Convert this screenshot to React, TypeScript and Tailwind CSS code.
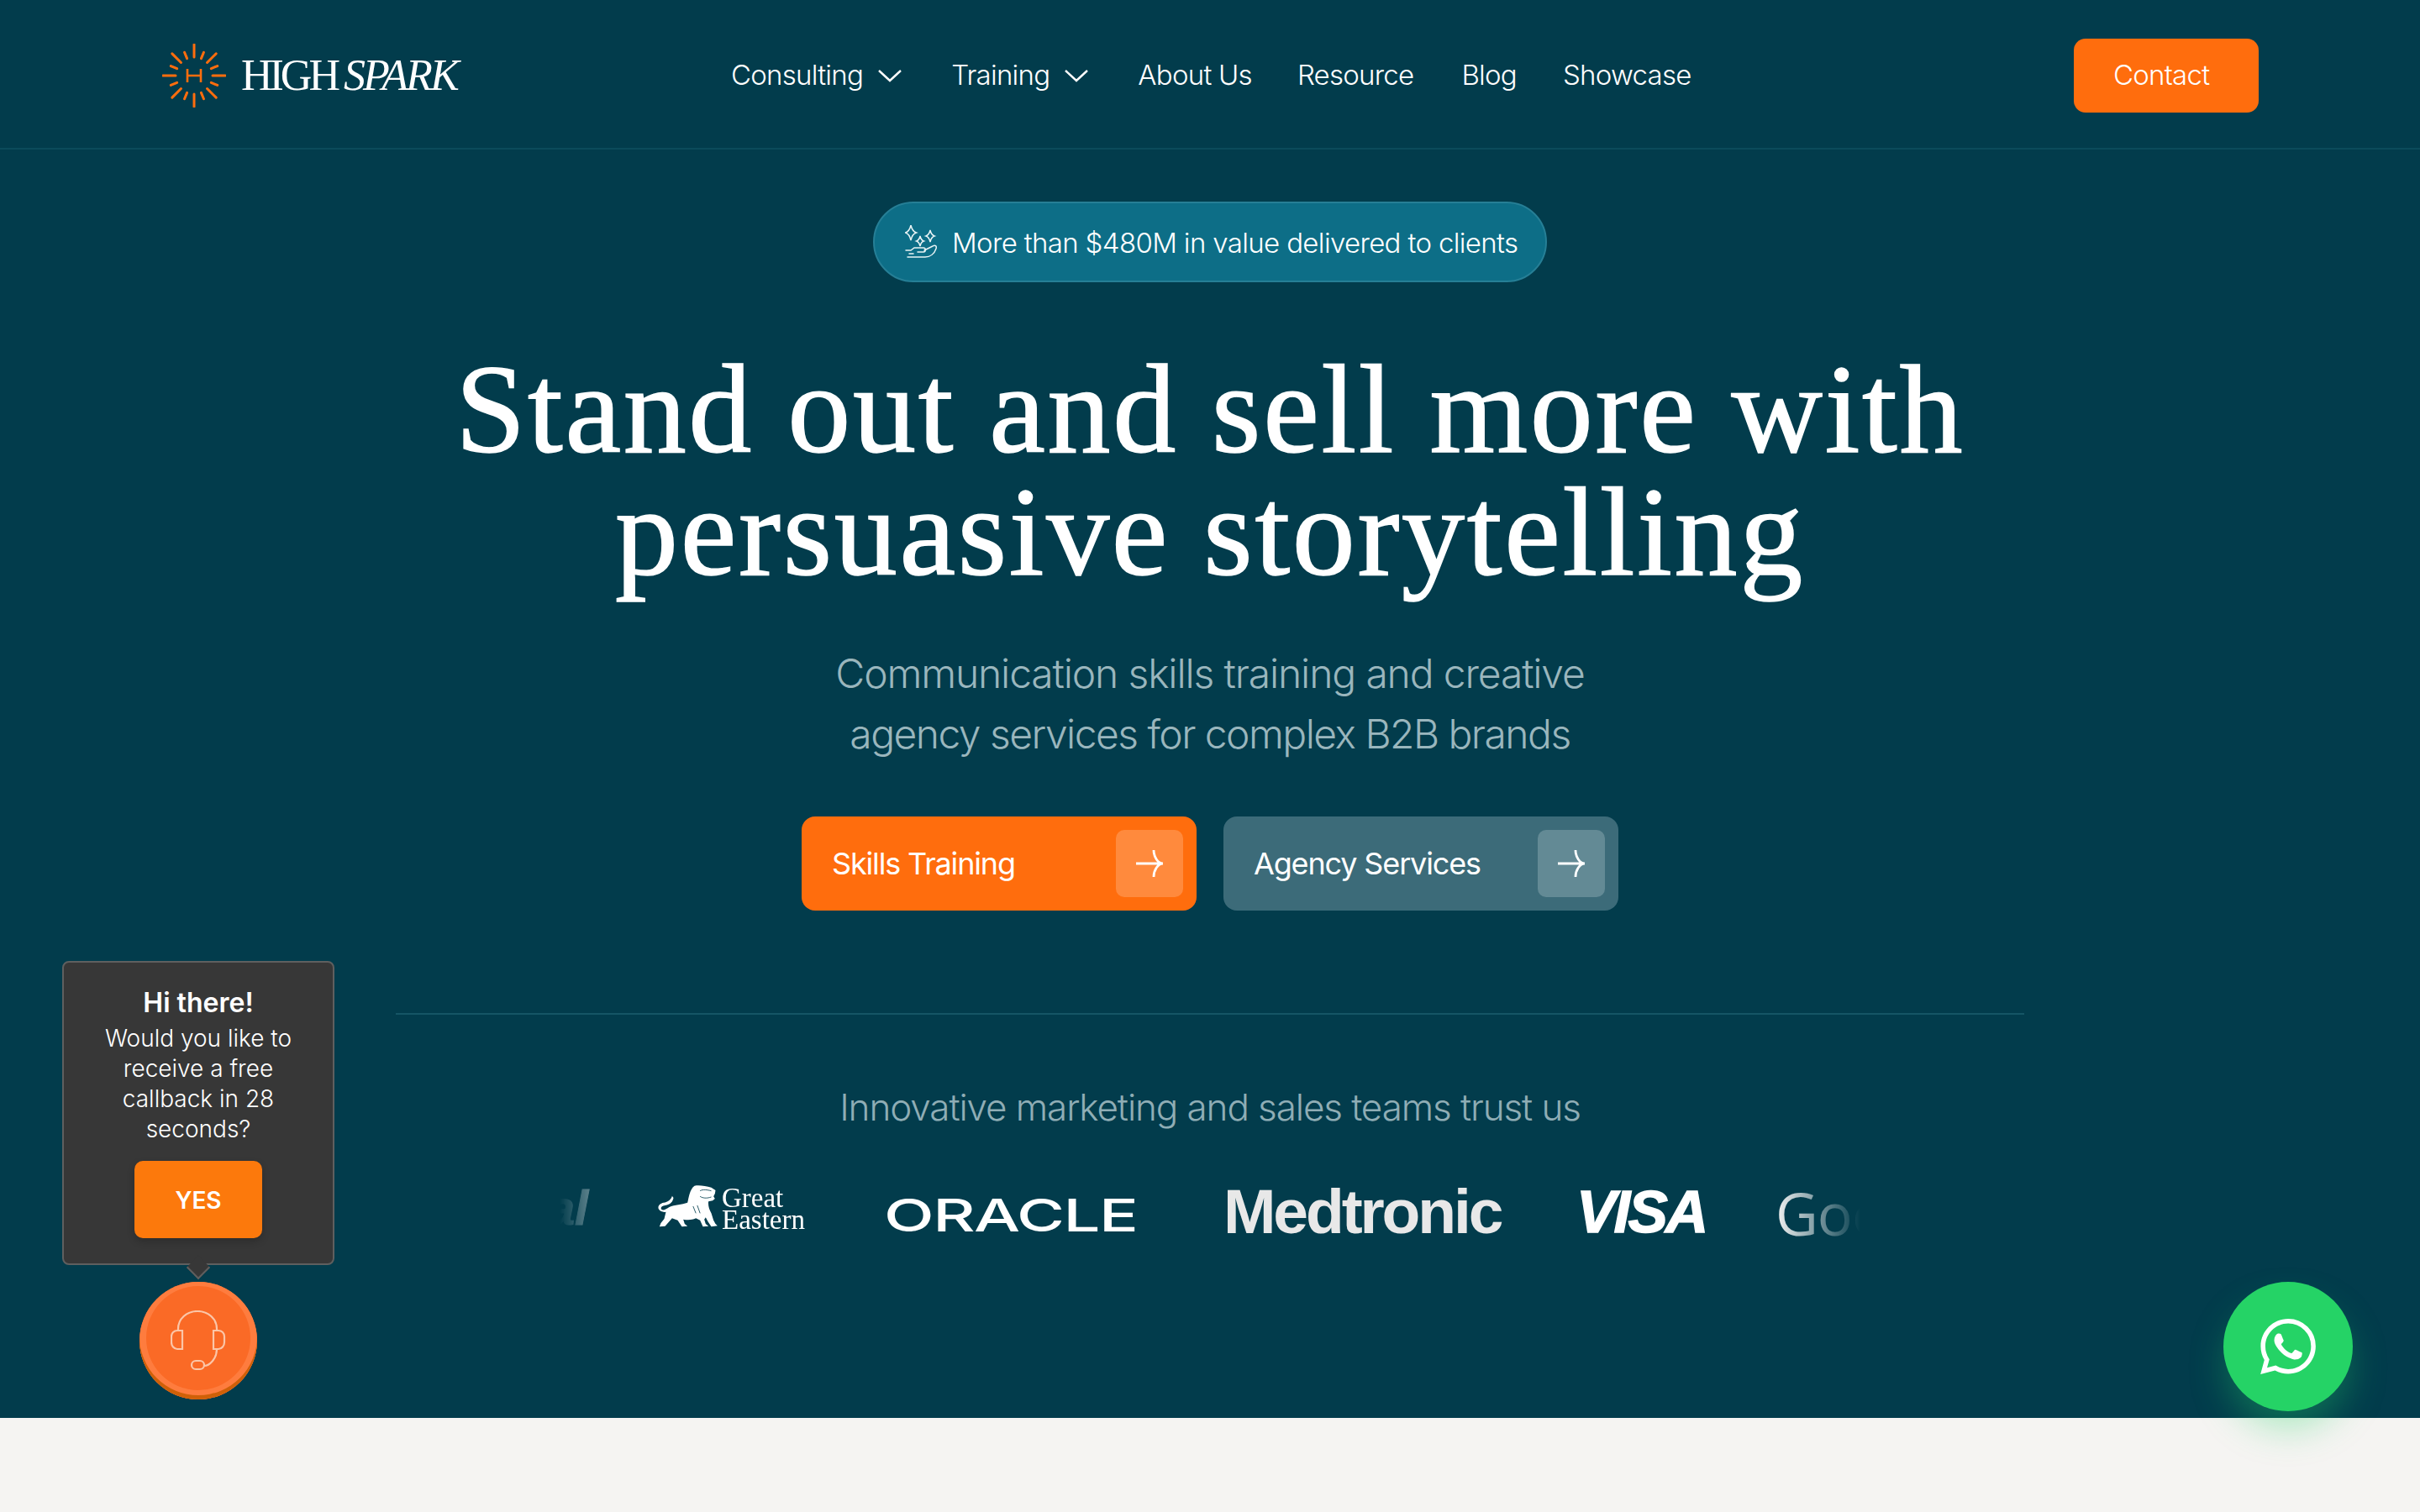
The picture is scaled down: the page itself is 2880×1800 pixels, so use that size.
import { SiWhatsapp } from "react-icons/si";

const sans = "font-['Inter','Liberation_Sans',sans-serif]";
const serif = "font-['Liberation_Serif',serif]";

function Sun() {
  const rays = Array.from({ length: 16 }, (_, i) => i);
  return (
    <svg width="76" height="76" viewBox="-38 -38 76 76" className="shrink-0">
      {rays.map((i) => (
        <line key={i} x1="0" y1="-22" x2="0" y2={i % 2 === 0 ? -37 : -30} stroke="#ff6d0d" strokeWidth="3" strokeLinecap="round" transform={`rotate(${i * 22.5})`} />
      ))}
      <path d="M-8 -8V8M8 -8V8M-8 0H8" stroke="#ff6d0d" strokeWidth="2.6" fill="none" />
    </svg>
  );
}

function Chevron() {
  return (
    <svg width="30" height="16" viewBox="0 0 30 16" fill="none" className="ml-[17px]">
      <path d="M2 2L15 14L28 2" stroke="#fff" strokeWidth="2.4" />
    </svg>
  );
}

function Arrow() {
  return (
    <svg width="34" height="34" viewBox="0 0 34 34" fill="none">
      <path d="M1 17H33M33 17C27 17 22 9 22 1M33 17C27 17 22 25 22 33" stroke="#fff" strokeWidth="2.8" />
    </svg>
  );
}

function Star({ x, y, r }: { x: number; y: number; r: number }) {
  const k = r * 0.18;
  return <path d={`M${x} ${y - r}Q${x + k} ${y - k} ${x + r * 0.72} ${y}Q${x + k} ${y + k} ${x} ${y + r}Q${x - k} ${y + k} ${x - r * 0.72} ${y}Q${x - k} ${y - k} ${x} ${y - r}Z`} />;
}

function BadgeIcon() {
  return (
    <svg width="38" height="40" viewBox="0 0 38 40" fill="none" stroke="#e8f3f5" strokeWidth="1.5" className="shrink-0">
      <Star x={7} y={9} r={9} />
      <Star x={30} y={13} r={7} />
      <Star x={18} y={19} r={6} />
      <path d="M1 30H7L11 27H22C25 27 25 32 22 32H15M23 30L33 25C36 23 38 25 37 28C35 34 30 38 24 38H3M5 34H10" strokeLinecap="round" />
    </svg>
  );
}

function Lion() {
  return (
    <svg width="72" height="50" viewBox="0 0 215 150" className="shrink-0">
      <path fill="#fff" d="M130 2C145 -1 170 2 190 8L205 18L203 30L198 40L203 48L195 55L180 58C178 72 182 85 190 100L198 125L205 138L212 145L190 148L178 130L170 115L165 122L170 138L180 146L160 148L150 125L135 118C120 125 105 125 90 122L95 138L105 146L85 148L70 125L50 118L35 135L25 146L5 148L10 135L22 120L28 95C20 97 8 95 2 85C-2 75 5 65 20 62C35 60 48 50 50 38L55 45C52 60 45 68 25 72C12 74 8 80 12 86C18 92 30 85 40 78C60 68 85 70 105 62C110 45 112 15 130 2Z" />
      <path d="M125 75L135 100M140 72L150 100M150 20C160 14 175 16 190 20M150 40C160 46 172 48 190 42" stroke="#023d4d" strokeWidth="2.5" fill="none" />
    </svg>
  );
}

function Headset() {
  return (
    <svg width="66" height="72" viewBox="0 0 66 72" fill="none" stroke="#fbc6a8" strokeWidth="2.2">
      <path d="M9 24V22C9 10 19 1 32 1C45 1 55 10 55 22V24" />
      <path d="M14 24H8C4 24 1 27 1 31V38C1 42 4 46 8 46H14Z" />
      <path d="M51 24H57C61 24 64 27 64 31V38C64 42 61 46 57 46H51Z" />
      <path d="M55 46C55 58 46 66 40 66" />
      <rect x="25" y="60" width="15" height="10" rx="5" />
    </svg>
  );
}

function PrimaryBtn({ label, bg, box }: { label: string; bg: string; box: string }) {
  return (
    <a className={`w-[470px] h-[112px] rounded-[16px] flex items-center justify-between pl-[36px] pr-[16px] text-[36px] text-white tracking-[-1.15px] ${bg}`}>
      <span>{label}</span>
      <span className={`w-[80px] h-[80px] rounded-[10px] flex items-center justify-center ${box}`}>
        <Arrow />
      </span>
    </a>
  );
}

export default function App() {
  return (
    <div className={`relative h-[1800px] w-full overflow-hidden bg-[#f5f4f2] ${sans}`}>
      <section className="h-[1688px] bg-[#023c4c]">
        <header className="h-[178px] pt-[4px] border-b-2 border-[#0b4b5b] flex items-center pl-[193px] pr-[192px] text-white">
          <div className="flex items-center w-[677px]">
            <Sun />
            <div className={`ml-[18px] flex items-baseline text-[52px] leading-none ${serif}`}>
              <span className="tracking-[-4px]">HIGH</span>
              <span className="ml-[8px] italic tracking-[-2.9px]">SPARK</span>
            </div>
          </div>
          <nav className="flex items-center text-[33px] font-[350] tracking-[-0.75px]">
            <span>Consulting</span>
            <Chevron />
            <span className="ml-[58px]">Training</span>
            <Chevron />
            <span className="ml-[58px]">About Us</span>
            <span className="ml-[54px]">Resource</span>
            <span className="ml-[57px]">Blog</span>
            <span className="ml-[55px]">Showcase</span>
          </nav>
          <a className="ml-auto w-[220px] h-[88px] rounded-[14px] bg-[#ff6d0d] flex items-center pl-[47px] text-[33px] font-[350] tracking-[-0.75px]">Contact</a>
        </header>

        <div className="flex flex-col items-center">
          <div className="mt-[62px] h-[96px] w-[802px] rounded-[48px] bg-[#0d6e87] border-2 border-[#267f96] flex items-center pl-[36px] text-white text-[33px] font-[350] tracking-[-0.65px] whitespace-nowrap">
            <BadgeIcon />
            <span className="ml-[18px] mt-[4px]">More than $480M in value delivered to clients</span>
          </div>

          <h1 className={`mt-[78px] text-center text-white text-[150px] leading-[146px] tracking-[2.7px] [-webkit-text-stroke:1.5px_white] ${serif}`}>
            Stand out and sell more with
            <br />
            persuasive storytelling
          </h1>

          <p className="mt-[60px] text-center text-[#9ab6bd] text-[48px] leading-[72px] font-light tracking-[-1.15px]">
            Communication skills training and creative
            <br />
            <span className="tracking-[-1.55px]">agency services for complex B2B brands</span>
          </p>

          <div className="mt-[62px] flex gap-[32px]">
            <PrimaryBtn label="Skills Training" bg="bg-[#ff6d0d]" box="bg-[#ff8a3d]" />
            <PrimaryBtn label="Agency Services" bg="bg-[#3c6b79]" box="bg-[#638a95]" />
          </div>

          <div className="mt-[122px] w-[1938px] h-[2px] bg-[#155565]" />

          <p className="mt-[80px] text-[#8fadb5] text-[44px] leading-[60px] font-light tracking-[-1.1px]">Innovative marketing and sales teams trust us</p>

          <div className="mt-[49px] w-[1548px] h-[90px] flex items-center overflow-hidden text-white [mask-image:linear-gradient(to_right,transparent_0,black_100px,black_1448px,transparent_100%)]">
            <div className="w-[34px] shrink-0 flex justify-end text-[58px] font-bold italic font-['Liberation_Sans',sans-serif] [-webkit-text-stroke:1px_white] mt-[-10px]">al</div>
            <div className="ml-[83px] flex items-center shrink-0 mt-[-12px]">
              <Lion />
              <div className={`ml-[4px] mt-[6px] text-[33px] leading-[26px] ${serif}`}>
                Great
                <br />
                Eastern
              </div>
            </div>
            <div className="ml-[94px] w-[300px] shrink-0 font-medium text-[54px] leading-none origin-left scale-x-[1.44] tracking-[-1px] mt-[10px]">ORACLE</div>
            <div className="ml-[104px] w-[332px] shrink-0 font-bold text-[75px] leading-none text-[#e8e8e8] font-['Liberation_Sans',sans-serif] tracking-[-3.1px]">Medtronic</div>
            <div className="ml-[88px] w-[155px] shrink-0 font-bold italic text-[71px] leading-none font-['Liberation_Sans',sans-serif] tracking-[-2.8px] [-webkit-text-stroke:1.5px_white] mt-[0px]">VISA</div>
            <div className="ml-[82px] shrink-0 text-[70px] leading-none font-medium font-['Open_Sans',sans-serif] text-[#f2f2f2] tracking-[-1px] mt-[4px]">Google</div>
          </div>
        </div>
      </section>

      {/* callback widget */}
      <div className="absolute left-[74px] top-[1144px] w-[324px] h-[362px] rounded-[8px] bg-[#373737] border-2 border-[#5f5f5f] flex flex-col items-center text-white text-center">
        <div className="mt-[28px] text-[32px] leading-[40px] font-semibold">Hi there!</div>
        <div className="mt-[4px] w-[270px] text-[28px] leading-[36px] font-light">Would you like to receive a free callback in 28 seconds?</div>
        <a className="mt-[20px] w-[152px] h-[92px] rounded-[10px] bg-[#fc790c] flex items-center justify-center pt-[2px] text-[28px] font-semibold shadow-[0_4px_10px_rgba(0,0,0,0.2)]">YES</a>
        <span className="absolute left-1/2 -translate-x-1/2 bottom-[-16px] w-[20px] h-[20px] rotate-45 translate-y-[-1px] bg-[#373737] border-r-2 border-b-2 border-[#5f5f5f] origin-center" />
      </div>
      <div className="absolute left-[166px] top-[1526px] w-[140px] h-[140px] rounded-full bg-[#fa6a26] flex items-center justify-center shadow-[inset_0_-5px_0_0_#cf6008,inset_0_-3px_0_8px_#fe7c3e]">
        <Headset />
      </div>

      {/* whatsapp */}
      <div className="absolute left-[2646px] top-[1526px] w-[154px] h-[154px] rounded-full bg-[#25d366] flex items-center justify-center shadow-[0_24px_44px_-4px_rgba(37,211,102,0.35)]">
        <SiWhatsapp className="text-white w-[66px] h-[66px]" />
      </div>
    </div>
  );
}
